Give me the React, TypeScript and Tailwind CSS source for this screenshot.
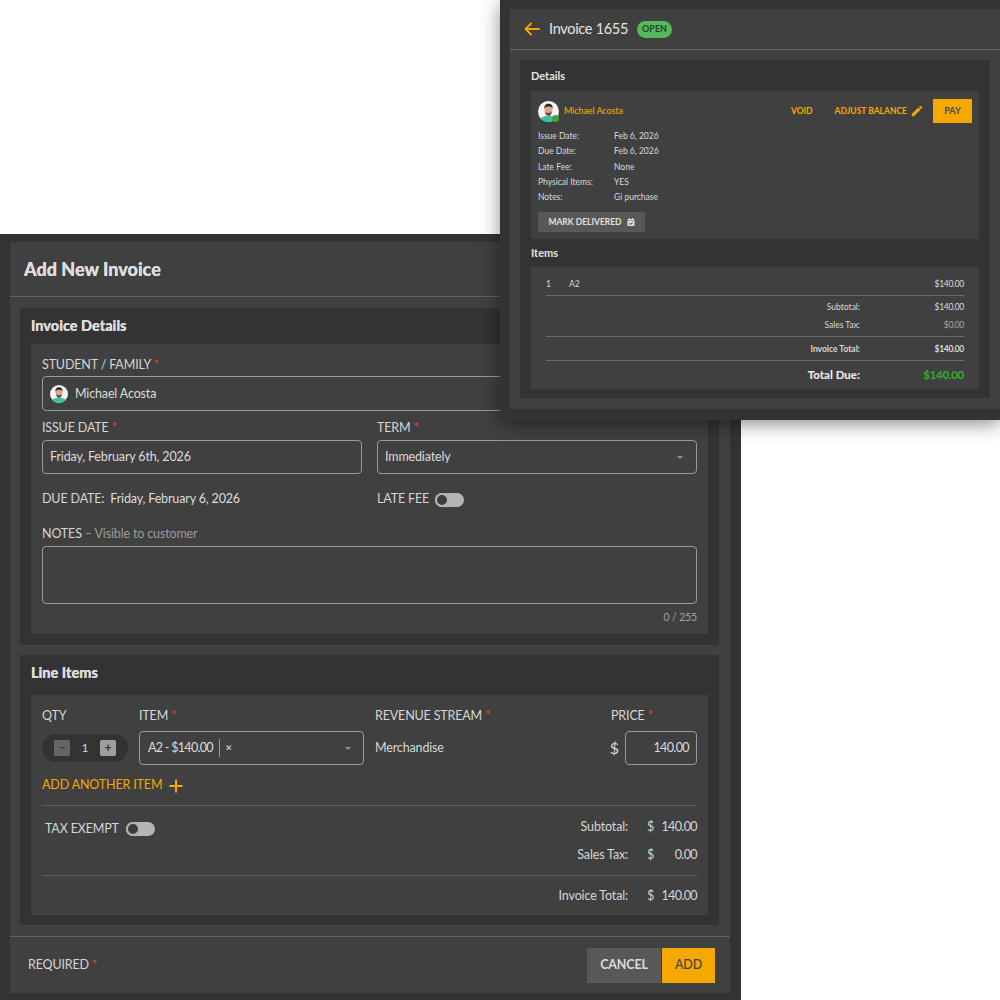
import { Plus } from "lucide-react";
import { MdEdit } from "react-icons/md";
import { FaCalendarCheck } from "react-icons/fa";

const Avatar = ({ size, dot }: { size: number; dot?: boolean }) => (
  <span className="relative shrink-0 block" style={{ width: size, height: size }}>
    <svg viewBox="0 0 24 24" width={size} height={size} className="block">
      <clipPath id="av">
        <circle cx="12" cy="12" r="12" />
      </clipPath>
      <g clipPath="url(#av)">
        <rect width="24" height="24" fill="#f4f4f4" />
        <path d="M1 24c0-5 5-7 11-7s11 2 11 7z" fill="#2fc7a0" />
        <rect x="9.500" y="13" width="5" height="5" fill="#c99478" />
        <ellipse cx="12" cy="10" rx="4.600" ry="5.600" fill="#d8a78a" />
        <path d="M7.200 9c-.4-4 1.800-6 4.800-6s5.200 2 4.800 6c-.8-2-2-2.600-4.800-2.600S8 7 7.200 9z" fill="#2d2522" />
        <path d="M8 12c.6 3.500 2 4.500 4 4.500s3.400-1 4-4.500c-1 1.500-2 1.600-4 1.600S9 13.500 8 12z" fill="#5a4438" />
      </g>
    </svg>
    {dot && <span className="absolute right-0 bottom-0 w-[7px] h-[7px] rounded-full bg-[#3fa535]" />}
  </span>
);

const Star = () => <span className="text-[#d9512c]"> *</span>;

const Caret = () => <span className="w-0 h-0 border-x-[3.500px] border-x-transparent border-t-[3.500px] border-t-[#8f8f8f]" />;

const Toggle = () => (
  <span className="relative block w-[29px] h-[14px] rounded-full bg-[#b4b4b4]">
    <span className="absolute left-0 top-0 w-[14px] h-[14px] rounded-full bg-[#3c3c3c] border-2 border-[#b4b4b4]" />
  </span>
);

const Field = ({ children, className }: { children?: React.ReactNode; className: string }) => (
  <div className={`flex items-center border border-[#9a9a9a] rounded-[4px] text-[#dcdcdc] ${className}`}>{children}</div>
);

const Total = ({ label, value, className }: { label: string; value: string; className: string }) => (
  <div className={`flex items-center justify-end text-[#d6d6d6] ${className}`}>
    <span>{label}</span>
    <span className="ml-[19px] w-[12px]">$</span>
    <span className="w-[38px] text-right tracking-[-0.6px]">{value}</span>
  </div>
);

const detailRows = [
  ["Issue Date:", "Feb 6, 2026"],
  ["Due Date:", "Feb 6, 2026"],
  ["Late Fee:", "None"],
  ["Physical Items:", "YES"],
  ["Notes:", "Gi purchase"],
];

const InvoiceCard = () => (
  <div className="absolute top-0 right-0 w-[500px] h-[420px] bg-[#333333] pt-[9px] pl-[10px] pb-[11px] shadow-[0_4px_18px_rgba(0,0,0,0.45)] overflow-hidden">
    <div className="h-full bg-[#404040] flex flex-col">
      <div className="h-[41px] shrink-0 flex items-center pl-[10px] border-b border-[#6a6a6a]">
        <svg viewBox="0 0 24 24" width={24} height={24} fill="none" stroke="#f5a800" strokeWidth={1.800} strokeLinecap="round" strokeLinejoin="round">
          <path d="M19 12H5.500M11 6.500 5.500 12l5.500 5.500" />
        </svg>
        <span className="ml-[5px] text-[14.500px] tracking-[-0.3px] leading-none text-[#e4e4e4]">Invoice 1655</span>
        <span className="ml-[9px] h-[17px] w-[35px] flex items-center justify-center rounded-full bg-[#55b95c] text-[9px] font-bold text-[#24452a]">OPEN</span>
      </div>
      <div className="mt-[10px] mr-[10px] ml-[10px] h-[338px] bg-[#333333] px-[11px] flex flex-col">
        <div className="h-[31px] pt-[2px] shrink-0 flex items-center text-[11px] font-bold text-[#e4e4e4]">Details</div>
        <div className="h-[148px] shrink-0 bg-[#404040] pl-[7px] pr-[7px] pt-[8px]">
          <div className="flex items-center h-[24px]">
            <Avatar size={21} dot />
            <span className="ml-[5px] text-[9px] font-medium tracking-[-0.1px] text-[#f5a800]">Michael Acosta</span>
            <span className="ml-auto text-[8.500px] font-bold text-[#f5a800]">VOID</span>
            <span className="ml-[22px] text-[8.500px] font-bold text-[#f5a800]">ADJUST BALANCE</span>
            <MdEdit size={14} className="ml-[3px] text-[#f5a800]" />
            <span className="ml-[9px] w-[39px] h-[24px] flex items-center justify-center bg-[#f5a800] text-[9px] font-bold text-[#4a4a4a]">PAY</span>
          </div>
          <div className="mt-[6px]">
            {detailRows.map(([k, v]) => (
              <div key={k} className="flex items-center h-[15.200px] text-[8.500px] text-[#dadada]">
                <span className="w-[76px]">{k}</span>
                <span>{v}</span>
              </div>
            ))}
          </div>
          <div className="mt-[7px] w-[107px] h-[20px] bg-[#585858] flex items-center justify-center text-[8.500px] font-bold text-[#e0e0e0]">
            MARK DELIVERED
            <FaCalendarCheck size={8} className="ml-[5px]" />
          </div>
        </div>
        <div className="h-[28px] shrink-0 flex items-center text-[11px] font-bold text-[#e4e4e4]">Items</div>
        <div className="h-[122px] shrink-0 bg-[#404040] px-[15px] text-[8.500px] text-[#dadada]">
          <div className="h-[29px] pt-[6px] flex items-center border-b border-[#6a6a6a]">
            <span className="w-[23px]">1</span>
            <span>A2</span>
            <span className="ml-auto tracking-[-0.3px]">$140.00</span>
          </div>
          <div className="h-[41px] pt-[2px] border-b border-[#6a6a6a]">
            <div className="h-[18px] flex items-center justify-end"><span>Subtotal:</span><span className="w-[104px] text-right tracking-[-0.3px]">$140.00</span></div>
            <div className="h-[18px] flex items-center justify-end"><span>Sales Tax:</span><span className="w-[104px] text-right tracking-[-0.3px] text-[#a8a8a8]">$0.00</span></div>
          </div>
          <div className="h-[24px] pt-[1px] flex items-center justify-end font-bold border-b border-[#6a6a6a]">
            <span>Invoice Total:</span><span className="w-[104px] text-right tracking-[-0.3px]">$140.00</span>
          </div>
          <div className="h-[27px] flex items-center justify-end font-black text-[11.500px] text-[#e8e8e8]">
            <span>Total Due:</span><span className="w-[104px] text-right tracking-[-0.3px] text-[#35a52e]">$140.00</span>
          </div>
        </div>
      </div>
    </div>
  </div>
);

const AddInvoice = () => (
  <div className="w-[741px] h-[766px] bg-[#333333] pt-[8px] pl-[10px] pr-[11px] pb-[7px]">
    <div className="h-full bg-[#404040] flex flex-col text-[12.500px] tracking-[-0.15px] text-[#d6d6d6]">
      <div className="h-[55px] shrink-0 flex items-center pl-[14px] border-b border-[#636363] text-[18px] tracking-normal font-black text-[#dddddd] [text-shadow:0_0_0.6px_#dddddd]">Add New Invoice</div>

      <div className="mt-[11px] ml-[10px] mr-[11px] bg-[#333333] px-[11px] pb-[11px]">
        <div className="h-[36px] pb-[1px] flex items-center text-[14.500px] tracking-normal font-black text-[#dddddd] [text-shadow:0_0_0.5px_#dddddd]">Invoice Details</div>
        <div className="h-[290px] bg-[#404040] px-[11px] flex flex-col">
          <div className="h-[32px] shrink-0 pt-[12px] leading-[18px]">STUDENT / FAMILY<Star /></div>
          <Field className="h-[35px] shrink-0 pl-[7px]">
            <Avatar size={18} />
            <span className="ml-[7px] pt-[1px]">Michael Acosta</span>
          </Field>
          <div className="grid grid-cols-2 gap-x-[15px]">
            <div>
              <div className="h-[29px] pt-[8px] leading-[18px]">ISSUE DATE<Star /></div>
              <Field className="h-[34px] pl-[7px]">Friday, February 6th, 2026</Field>
            </div>
            <div>
              <div className="h-[29px] pt-[8px] leading-[18px]">TERM<Star /></div>
              <Field className="h-[34px] px-[7px] justify-between">
                <span>Immediately</span>
                <span className="mr-[6px] flex"><Caret /></span>
              </Field>
            </div>
            <div className="h-[50px] pt-[1px] flex items-center">
              <span>DUE DATE:</span>
              <span className="ml-[6px] text-[#dcdcdc]">Friday, February 6, 2026</span>
            </div>
            <div className="h-[50px] pt-[1px] flex items-center">
              <span>LATE FEE</span>
              <span className="ml-[6px]"><Toggle /></span>
            </div>
          </div>
          <div className="h-[22px] shrink-0 pt-[1px] leading-[18px]">NOTES <span className="text-[#9c9c9c]">– Visible to customer</span></div>
          <Field className="h-[58px] shrink-0" />
          <div className="mt-[6px] text-right text-[10.500px] text-[#a0a0a0]">0 / 255</div>
        </div>
      </div>

      <div className="mt-[10px] ml-[10px] mr-[11px] bg-[#333333] px-[11px] pb-[10px]">
        <div className="h-[40px] pb-[4px] flex items-center text-[14.500px] tracking-normal font-black text-[#dddddd] [text-shadow:0_0_0.5px_#dddddd]">Line Items</div>
        <div className="h-[220px] bg-[#404040] px-[11px] flex flex-col">
          <div className="flex h-[36px] items-end pb-[6px] leading-[18px]">
            <span className="w-[97px]">QTY</span>
            <span className="w-[236px]">ITEM<Star /></span>
            <span className="w-[236px]">REVENUE STREAM<Star /></span>
            <span>PRICE<Star /></span>
          </div>
          <div className="flex items-center h-[34px]">
            <div className="w-[86px] h-[28px] rounded-full bg-[#333333] flex items-center justify-between px-[12px] text-[#d6d6d6]">
              <span className="w-[16px] h-[16px] rounded-[2px] bg-[#666666] flex items-center justify-center text-[#3a3a3a] font-bold leading-none">−</span>
              <span className="text-[12px]">1</span>
              <span className="w-[16px] h-[16px] rounded-[2px] bg-[#a0a0a0] flex items-center justify-center text-[#3a3a3a] font-bold leading-none">+</span>
            </div>
            <Field className="ml-[11px] w-[225px] h-[34px] pl-[8px] pr-[12px] text-[#d8d8d8]">
              <span className="tracking-[-0.7px]">A2 - $140.00</span>
              <span className="ml-[6px] w-px h-[18px] bg-[#9a9a9a]" />
              <span className="ml-[5px] text-[9px]">✕</span>
              <span className="ml-auto flex"><Caret /></span>
            </Field>
            <span className="ml-[11px]">Merchandise</span>
            <span className="ml-auto text-[16px]">$</span>
            <Field className="ml-[6px] w-[72px] h-[34px] justify-end pr-[7px] tracking-[-0.6px]">140.00</Field>
          </div>
          <div className="h-[41px] pt-[1px] shrink-0 flex items-center border-b border-[#5e5e5e] text-[#f5a800]">
            ADD ANOTHER ITEM
            <Plus size={20} strokeWidth={2.400} className="ml-[4px]" />
          </div>
          <div className="flex h-[70px] border-b border-[#5e5e5e]">
            <div className="pl-[3px] flex items-center h-[46px]">
              <span>TAX EXEMPT</span>
              <span className="ml-[7px]"><Toggle /></span>
            </div>
            <div className="ml-auto pt-[7px]">
              <Total label="Subtotal:" value="140.00" className="h-[28px]" />
              <Total label="Sales Tax:" value="0.00" className="h-[28px]" />
            </div>
          </div>
          <Total label="Invoice Total:" value="140.00" className="h-[39px] pt-[1px]" />
        </div>
      </div>

      <div className="mt-[11px] flex-1 border-t border-[#636363] flex items-center pl-[18px] pr-[15px]">
        <span>REQUIRED<Star /></span>
        <span className="ml-auto w-[74px] h-[35px] bg-[#585858] flex items-center justify-center font-bold text-[#dcdcdc]">CANCEL</span>
        <span className="ml-[1px] w-[53px] h-[35px] bg-[#f5a800] flex items-center justify-center font-medium text-[#444444]">ADD</span>
      </div>
    </div>
  </div>
);

export default function App() {
  return (
    <div className="relative w-[1000px] h-[1000px] bg-white overflow-hidden font-['Lato',sans-serif]">
      <div className="pt-[234px]">
        <AddInvoice />
      </div>
      <InvoiceCard />
    </div>
  );
}
